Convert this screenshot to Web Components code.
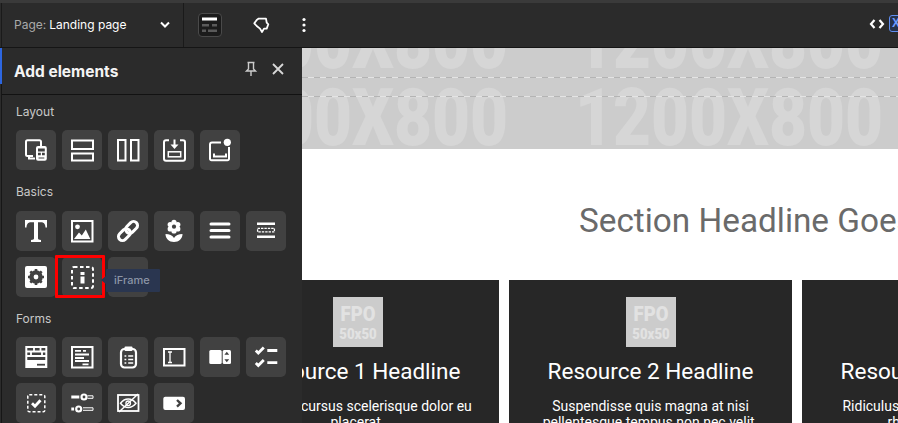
<!DOCTYPE html>
<html lang="en"><head><meta charset="utf-8"><title>Page builder</title>
<style>
html,body{margin:0;padding:0;background:#fff}
body{width:898px;height:423px;overflow:hidden;font-family:"Inter","Liberation Sans",sans-serif}
</style></head><body>
<pb-app></pb-app>
<script>
const S='fill="none" stroke="#fff" stroke-width="2"';
const ICONS={
devices:`<path ${S} d="M17 26h-5.500a1.500 1.500 0 0 1-1.500-1.500V11.800a1.500 1.500 0 0 1 1.500-1.500h12a1.500 1.500 0 0 1 1.500 1.500V16"/><path ${S} d="M13 26v2.500h6"/><rect x="20" y="16" width="10.800" height="14.800" rx="2" fill="#fff"/><path d="M22 18.500h6.800v3H22zM22 22.800h2.800v2.500H22zM26 22.800h2.800v2.500H26z" fill="#414141"/><path d="M22.500 27.500h5.800v1h-5.800z" fill="#414141"/>`,
rows:`<rect ${S} x="10" y="10.500" width="21" height="8.500"/><rect ${S} x="10" y="23.500" width="21" height="7"/>`,
cols:`<rect ${S} x="10" y="10" width="7.500" height="20.500"/><rect ${S} x="23" y="10" width="7.500" height="20.500"/>`,
save:`<path ${S} d="M15 10.300h-3a2 2 0 0 0-2 2v16.400a2 2 0 0 0 2 2h17a2 2 0 0 0 2-2V12.300a2 2 0 0 0-2-2h-3"/><path ${S} d="M20.500 9.500v7"/><path d="M16.500 14.500h8l-4 4.500z" fill="#fff"/><rect x="14.300" y="21.800" width="12.400" height="5" fill="none" stroke="#fff" stroke-width="1.500"/>`,
popup:`<path ${S} d="M21 12.500h-9a2 2 0 0 0-2 2v14.200a1.500 1.500 0 0 0 1.500 1.500h16a1.500 1.500 0 0 0 1.500-1.500V17"/><path ${S} d="M14 23.500v3h12v-3"/><circle cx="27.300" cy="12.300" r="3.600" fill="#fff"/>`,
T:`<path fill="#fff" d="M9 9h22v7.500h-1.500c-.3-3-1.200-5.200-4.500-5.200h-3v16c0 1.300.7 1.700 3 1.700V31H15v-2c2.300 0 3-.4 3-1.700v-16h-3c-3.300 0-4.200 2.200-4.500 5.200H9z"/>`,
image:`<rect ${S} x="10" y="10" width="20.500" height="20.500"/><circle cx="15.500" cy="15.800" r="2.400" fill="#fff"/><path d="M12 28l5-6.500 2.800 3 4-6 4.500 9.500z" fill="#fff"/>`,
link:`<g fill="none" stroke="#fff" stroke-width="3"><rect x="9.650" y="19.600" width="13.500" height="8" rx="4" transform="rotate(-45 16.400 23.600)"/><rect x="16.850" y="12.400" width="13.500" height="8" rx="4" transform="rotate(-45 23.600 16.400)"/></g>`,
flower:`<g fill="#fff"><circle cx="20" cy="11.300" r="2.600"/><circle cx="20" cy="20" r="2.600"/><circle cx="16.200" cy="13.500" r="2.600"/><circle cx="23.800" cy="13.500" r="2.600"/><circle cx="16.200" cy="17.900" r="2.600"/><circle cx="23.800" cy="17.900" r="2.600"/><circle cx="20" cy="15.700" r="4"/></g><circle cx="20" cy="15.700" r="2.100" fill="#414141"/><path d="M11.500 23c3.800 0 7 1.600 8.500 4 1.500-2.400 4.700-4 8.500-4 0 4.700-3.600 8-8.500 8s-8.500-3.300-8.500-8z" fill="#fff"/>`,
menu:`<path d="M11 13h18M11 19.500h18M11 26h18" stroke="#fff" stroke-width="3" stroke-linecap="round"/>`,
hr:`<path d="M11 12.700h18M11 25.700h18" stroke="#fff" stroke-width="2.600"/><rect x="11.600" y="17.300" width="16.800" height="3.600" fill="none" stroke="#fff" stroke-width="1.300" stroke-dasharray="2.400 1"/>`,
gear:`<rect x="9" y="9" width="22" height="22" rx="2" fill="#fff"/><circle cx="20" cy="20" r="5" fill="none" stroke="#414141" stroke-width="3.500"/><path d="M20 12v16M12 20h16M14.300 14.300l11.400 11.400M25.700 14.300L14.300 25.700" stroke="#414141" stroke-width="2.600"/><circle cx="20" cy="20" r="2.400" fill="#fff"/>`,
iframe:`<rect x="10" y="10" width="21" height="21" rx="2" fill="none" stroke="#fff" stroke-width="2" stroke-dasharray="3.500 2.500"/><rect x="18.500" y="15" width="4" height="3" fill="#fff"/><rect x="18.500" y="19.500" width="4" height="7" fill="#fff"/>`,
form:`<rect ${S} x="10.300" y="10" width="20" height="20"/><path d="M10 14.500h21M10 19h21M18 10v4.500M24.500 10v4.500M15 14.500V19M26 14.500V19" stroke="#fff" stroke-width="1.800"/><path d="M10 23h21v8H10z" fill="#fff"/><path d="M21 26.800h8v1.800h-8z" fill="#414141"/>`,
textblock:`<rect ${S} x="10" y="10" width="20.500" height="20.500"/><path d="M13 13.800h6M21 13.800h3M13 17.500h14M13 21h9M13 24h14M20.500 27.300h6" stroke="#fff" stroke-width="1.800"/>`,
clip:`<rect x="13" y="12" width="15" height="18.500" rx="3.500" fill="none" stroke="#fff" stroke-width="2.200"/><rect x="16.500" y="9.500" width="8" height="4.500" rx="1" fill="#fff"/><path d="M16.500 19h1.800M20.200 19h5M16.500 22.500h1.800M20.200 22.500h5M16.500 26h1.800M20.200 26h5" stroke="#fff" stroke-width="1.700"/>`,
input:`<rect ${S} x="10" y="12" width="20.500" height="16.500"/><path d="M14 15h4M14 25.500h4M16 15v10.500" stroke="#fff" stroke-width="1.300"/>`,
select:`<rect x="9.300" y="13" width="12.400" height="14" rx="1.500" fill="#fff"/><rect x="22.700" y="13" width="8.300" height="14" rx="1.500" fill="#fff"/><path d="M26.800 14.800l2.400 3h-4.800zM26.800 25.200l2.400-3h-4.800z" fill="#414141"/>`,
checks:`<path d="M9.800 13.500l2.500 2.500 5.500-5.500M9.800 26l2.500 2.500 5.500-5.500" fill="none" stroke="#fff" stroke-width="2.800"/><path d="M21.300 13.500h10M21.300 25.700h10" stroke="#fff" stroke-width="2.800"/>`,
dashcheck:`<rect x="11.800" y="11.800" width="17" height="17" rx="1.500" fill="none" stroke="#fff" stroke-width="1.500" stroke-dasharray="3 2"/><path d="M16 20.300l3 3 5.500-6" fill="none" stroke="#fff" stroke-width="2.800"/>`,
sliders:`<path d="M9.300 12.500h8v3h-8zM9.300 24.500h2.800v3H9.300z" fill="#fff"/><circle cx="22" cy="14" r="2.500" fill="none" stroke="#fff" stroke-width="2.200"/><circle cx="16.700" cy="26" r="2.500" fill="none" stroke="#fff" stroke-width="2.200"/><path d="M25.500 12.800H31v2.500h-5.500M21 24.800H31v2.500H21" fill="none" stroke="#fff"/>`,
hidden:`<rect x="10" y="12" width="20.500" height="16" fill="none" stroke="#fff" stroke-width="1.800"/><path d="M12.500 20.300c4.500-5.600 11-5.600 15.500 0-4.500 5.600-11 5.600-15.500 0z" fill="none" stroke="#fff" stroke-width="1.500"/><circle cx="20.200" cy="20.300" r="2.300" fill="none" stroke="#fff" stroke-width="1.300"/><path d="M11 29L30 11" stroke="#fff" stroke-width="1.500"/>`,
button:`<rect x="9.300" y="13.700" width="21.700" height="13.300" rx="2" fill="#fff"/><path d="M23 17l3.500 3.300-3.500 3.300" fill="none" stroke="#414141" stroke-width="2.400"/>`
};
function define(name,css,html){
  customElements.define(name,class extends HTMLElement{
    constructor(){super();this.attachShadow({mode:'open'});}
    connectedCallback(){this.shadowRoot.innerHTML=`<style>${css}</style>`+html(this);}
  });
}
define('icon-btn',`:host{display:block;position:relative;width:40px;height:40px;background:#414141;border-radius:5px}
:host([icon="iframe"]){z-index:2}
svg{display:block;width:40px;height:40px}`,
el=>`<svg viewBox="0 0 40 40" aria-hidden="true">${ICONS[el.getAttribute('icon')]||''}</svg><slot></slot>`);

define('icon-section',`:host{display:block;padding:0 12px}
h3{margin:0;padding:0 2px;font:400 12px/16px Inter,"Liberation Sans",sans-serif;color:#c8c8c8}
.g{display:grid;grid-template-columns:repeat(6,40px);grid-auto-rows:40px;gap:6px;padding:10px 2px 0}
:host([wide]) .g{padding-top:11px}`,
el=>`<h3>${el.getAttribute('label')}</h3><div class="g"><slot></slot></div>`);

define('iframe-hint',`:host{display:block;position:absolute;left:-7px;top:-2px;width:50px;height:43px;box-sizing:border-box;border:3px solid #f00;border-radius:1px}
.tip{position:absolute;left:48px;top:11px;width:54px;height:23px;background:#2a3650;color:#8c95a6;font:500 11px/23px Inter,"Liberation Sans",sans-serif;padding-left:8px;box-sizing:border-box;white-space:nowrap;border-radius:1px}
.tip::before{content:"";position:absolute;left:-5px;top:7px;border:4px solid transparent;border-left:0;border-right:5px solid #2a3650}`,
()=>`<div class="tip">iFrame</div>`);

define('top-bar',`:host{display:flex;align-items:center;height:44px;background:#2b2b2b;border-top:3px solid #3a3a3a;border-bottom:1px solid #151515;color:#fff;font:400 12px/16px Inter,"Liberation Sans",sans-serif}
.edge{width:1px;align-self:stretch;background:#1a1a1a;margin-left:1px}
.page{display:flex;align-items:center;width:181px;padding:0 12px;height:100%;box-sizing:border-box}
.page span{color:#a9a9a9;margin-right:3px}.page b{font-weight:400;flex:1;white-space:nowrap}
.sep{width:1px;align-self:stretch;background:#1a1a1a}
.layout{margin-left:14px;width:24px;height:24px;box-sizing:border-box;background:#1b1b1b;border:1px solid #4a4a4a;border-radius:4px;display:block}
.grow{flex:1}
svg{display:block}
.code{margin-right:4px}
.x{box-sizing:border-box;width:24px;height:17px;margin-right:-15px;margin-top:-3px;border:1px solid #5f8df0;border-radius:3px;background:#26324a;color:#6f9cff;font:700 12px/15px "Liberation Sans",sans-serif;padding-left:2px}`,
()=>`<div class="edge"></div>
<div class="page"><span>Page:</span><b>Landing page</b><svg width="12" height="8" viewBox="0 0 12 8"><path d="M2 1.500l4 4 4-4" fill="none" stroke="#fff" stroke-width="2"/></svg></div>
<div class="sep"></div>
<svg class="layout" viewBox="0 0 22 22"><path d="M3 3.500h15v3H3z" fill="#fff"/><path d="M3 10h7v2.500H3zM13 10h5v2.500h-5zM3 15.500h4v2.500H3zM9 15.500h9v2.500H9z" fill="#5a5a5a"/></svg>
<svg style="margin-left:31px" width="17" height="16" viewBox="0 0 17 16"><path d="M5.700 1.600H13l.7 4 1.600 1.700-1.600 4.300H11l-2 3.400-2-3.400-3.300-2.600-2.400-2.700L3.700 3z" fill="none" stroke="#fff" stroke-width="1.800" stroke-linejoin="round"/></svg>
<svg style="margin-left:32px" width="4" height="16" viewBox="0 0 4 16"><circle cx="2" cy="2.500" r="1.600" fill="#fff"/><circle cx="2" cy="8" r="1.600" fill="#fff"/><circle cx="2" cy="13.500" r="1.600" fill="#fff"/></svg>
<div class="grow"></div>
<svg class="code" width="16" height="10" viewBox="0 0 16 10" style="margin-top:-3px"><path d="M5.500 1L2 5l3.500 4M10.500 1L14 5l-3.500 4" fill="none" stroke="#fff" stroke-width="2.200"/></svg>
<div class="x">X</div>`);

define('side-panel',`:host{display:block;flex:none;width:300px;margin-left:2px;background:#2b2b2b;position:relative;height:375px;color:#fff}
:host::before{content:"";position:absolute;left:-2px;top:0;width:2px;height:36px;background:#2d66e0}
:host::after{content:"";position:absolute;left:-1px;top:36px;bottom:0;width:1px;background:#161616}
header{display:flex;align-items:center;border-bottom:1px solid #121212;padding:0 18px 0 12px;box-sizing:border-box;height:47px}
h2{flex:1;margin:2px 0 0;font:700 15.500px/20px Inter,"Liberation Sans",sans-serif;color:#f4f4f4}
svg{display:block}
.list{display:flex;flex-direction:column;gap:14px;padding-top:9px}`,
()=>`<header><h2>Add elements</h2>
<svg width="14" height="16" viewBox="0 0 14 16" style="margin-right:14px;margin-top:-4px"><path d="M3.500 1.500h7M4.500 1.500v6.500l-2 2h9l-2-2V1.500M7 10v5" fill="none" stroke="#ccc" stroke-width="1.400"/></svg>
<svg width="12" height="12" viewBox="0 0 12 12" style="margin-top:-4px"><path d="M1 1l10 10M11 1L1 11" stroke="#d8d8d8" stroke-width="1.800"/></svg></header>
<div class="list"><slot></slot></div>`);

define('resource-card',`:host{display:block;flex:none;width:283px;height:200px;background:#272727;color:#fff;text-align:center;font-family:Roboto,"Liberation Sans",sans-serif;padding-top:17px;box-sizing:border-box}
.fpo{width:50px;height:50px;margin:0 auto;background:#ccc;color:#e2e2e2;font-family:Roboto,sans-serif;font-weight:900;overflow:hidden}
.fpo i{display:block;font-style:normal;transform:scaleX(.88);text-align:center}
.a{font-size:21px;line-height:24px;margin-top:5px}.b{font-size:15px;line-height:16px;margin-top:0}
h3{margin:11px 0 0;font:400 22.500px/26px Roboto,"Liberation Sans",sans-serif;white-space:nowrap}
p{margin:14px auto 0;font:400 14px/16px Roboto,"Liberation Sans",sans-serif;width:240px}`,
el=>`<div class="fpo"><i class="a">FPO</i><i class="b">50x50</i></div><h3>${el.getAttribute('title')}</h3><p><slot></slot></p>`);

define('main-canvas',`:host{display:block;flex:1;min-width:0;height:375px;overflow:hidden;background:#fff;font-family:Roboto,"Liberation Sans",sans-serif}
.hero{height:101px;background:#ccc;overflow:hidden;position:relative}
.rows{margin-top:-45px}
.row{display:flex;gap:76px;margin-left:-102px;height:77px;white-space:nowrap;font:900 80px/77px Roboto,sans-serif;color:#d6d6d6}
.row span{display:block;flex:none;width:299px;transform:scaleX(.82);transform-origin:0 50%}
.dash{position:absolute;left:0;right:0;height:1px;background:repeating-linear-gradient(90deg,#b4b4b4 0 6px,#e4e4e4 6px 12px)}
.d1{top:29px}.d2{top:48px}
h1{margin:52px 0 0 277px;font:400 33.300px/40px Roboto,sans-serif;color:#6a6a6a;white-space:nowrap}
.cards{display:flex;gap:10px;margin:39px 0 0 -86px;width:1100px}`,
()=>`<div class="hero"><div class="rows"><div class="row"><span>1200X800</span><span>1200X800</span></div><div class="row"><span>1200X800</span><span>1200X800</span></div></div><div class="dash d1"></div><div class="dash d2"></div></div>
<h1>Section Headline Goes Here</h1>
<div class="cards"><slot></slot></div>`);

define('pb-app',`:host{display:block;width:898px;height:423px;overflow:hidden;background:#2b2b2b}
.body{display:flex}`,
()=>`<top-bar></top-bar><div class="body">
<side-panel>
<icon-section label="Layout">
<icon-btn icon="devices"></icon-btn><icon-btn icon="rows"></icon-btn><icon-btn icon="cols"></icon-btn><icon-btn icon="save"></icon-btn><icon-btn icon="popup"></icon-btn>
</icon-section>
<icon-section label="Basics" wide>
<icon-btn icon="T"></icon-btn><icon-btn icon="image"></icon-btn><icon-btn icon="link"></icon-btn><icon-btn icon="flower"></icon-btn><icon-btn icon="menu"></icon-btn><icon-btn icon="hr"></icon-btn>
<icon-btn icon="gear"></icon-btn><icon-btn icon="iframe"><iframe-hint></iframe-hint></icon-btn><icon-btn></icon-btn>
</icon-section>
<icon-section label="Forms">
<icon-btn icon="form"></icon-btn><icon-btn icon="textblock"></icon-btn><icon-btn icon="clip"></icon-btn><icon-btn icon="input"></icon-btn><icon-btn icon="select"></icon-btn><icon-btn icon="checks"></icon-btn>
<icon-btn icon="dashcheck"></icon-btn><icon-btn icon="sliders"></icon-btn><icon-btn icon="hidden"></icon-btn><icon-btn icon="button"></icon-btn>
</icon-section>
</side-panel>
<main-canvas>
<resource-card title="Resource 1 Headline">Tristique cursus scelerisque dolor eu placerat.</resource-card>
<resource-card title="Resource 2 Headline">Suspendisse quis magna at nisi pellentesque tempus non nec velit.</resource-card>
<resource-card title="Resource 3 Headline">Ridiculus dapibus ut tempus nec rhoncus a magna.</resource-card>
</main-canvas></div>`);
</script>
</body></html>
